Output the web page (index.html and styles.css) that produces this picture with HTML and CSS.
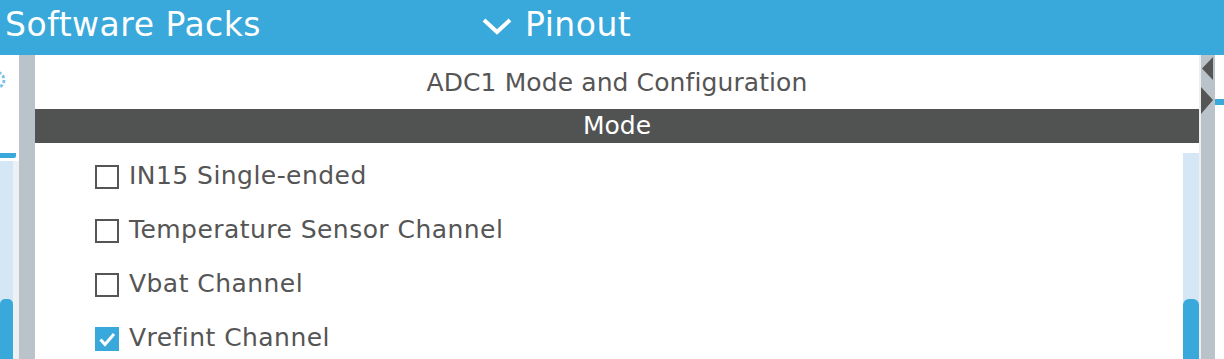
FILE: index.html
```html
<!DOCTYPE html>
<html>
<head>
<meta charset="utf-8">
<link rel="stylesheet" href="styles.css">
</head>
<body>
<div class="app">
  <header class="topbar">
    <div class="tab-sw">Software Packs</div>
    <div class="tab-pinout">
      <svg class="chevron" width="30" height="17" viewBox="0 0 30 17"><path d="M2 2 L15 14 L28 2" fill="none" stroke="#fff" stroke-width="4"/></svg>
      <span>Pinout</span>
    </div>
  </header>
  <div class="main">
    <aside class="left-strip">
      <svg class="gear" width="6" height="26" viewBox="0 0 6 26"><circle cx="-4" cy="13" r="8" fill="none" stroke="#7cc3e8" stroke-width="3" stroke-dasharray="3 2"/></svg>
      <div class="left-tab"></div>
      <div class="left-scroll">
        <div class="left-track"><div class="left-thumb"></div></div>
        <div class="left-edge"></div>
      </div>
    </aside>
    <div class="splitter"></div>
    <section class="panel">
      <div class="panel-title">ADC1 Mode and Configuration</div>
      <div class="section-bar">Mode</div>
      <div class="panel-body">
        <ul class="options">
          <li class="option"><span class="box"></span><span class="label">IN15 Single-ended</span></li>
          <li class="option"><span class="box"></span><span class="label">Temperature Sensor Channel</span></li>
          <li class="option"><span class="box"></span><span class="label">Vbat Channel</span></li>
          <li class="option"><span class="box checked"><svg width="24" height="24" viewBox="0 0 24 24"><path d="M5.5 12.5 L10 17.5 L19 7" fill="none" stroke="#fff" stroke-width="3"/></svg></span><span class="label">Vrefint Channel</span></li>
        </ul>
        <div class="scrollbar"><div class="thumb"></div></div>
      </div>
    </section>
    <div class="gap"></div>
    <div class="splitter right">
      <svg class="arrows" width="14" height="60" viewBox="0 0 14 60"><path d="M12 2 L1 13.5 L12 25 Z" fill="#555"/><path d="M0 32 L12 45 L0 59 Z" fill="#555"/></svg>
    </div>
    <div class="right-strip"><div class="right-mark"></div></div>
  </div>
</div>
</body>
</html>
```
FILE: styles.css
```css
html, body {
  margin: 0;
  padding: 0;
  width: 1224px;
  height: 359px;
  overflow: hidden;
  background: #fff;
  font-family: "DejaVu Sans", sans-serif;
}
.app {
  display: flex;
  flex-direction: column;
  width: 1224px;
  height: 359px;
}
.topbar {
  height: 55px;
  flex: 0 0 55px;
  background: #39a8da;
  color: #fff;
  display: flex;
  align-items: flex-start;
  font-size: 33px;
  line-height: 49px;
  letter-spacing: 0.5px;
}
.tab-sw {
  padding-left: 5px;
  width: 477px;
}
.tab-pinout {
  display: flex;
  align-items: flex-start;
}
.chevron {
  margin-top: 18px;
  margin-right: 13px;
}
.main {
  flex: 1;
  display: flex;
  min-height: 0;
}
.left-strip {
  width: 19px;
  flex: 0 0 19px;
  display: flex;
  flex-direction: column;
  background: #fff;
}
.gear {
  margin-top: 12px;
  display: block;
}
.left-tab {
  margin-top: 60px;
  width: 16px;
  height: 5px;
  background: #39a8da;
  border-bottom-right-radius: 2px;
}
.left-scroll {
  margin-top: 3px;
  flex: 1;
  display: flex;
}
.left-track {
  width: 13px;
  background: #d5e6f4;
  display: flex;
  flex-direction: column;
  justify-content: flex-end;
}
.left-thumb {
  height: 60px;
  background: #39a8da;
  border-radius: 5px 5px 0 0;
}
.left-edge {
  flex: 1;
  background: #eef1f3;
}
.splitter {
  width: 16px;
  flex: 0 0 16px;
  background: #b9c3c9;
}
.splitter.right {
  width: 14px;
  flex: 0 0 14px;
}
.arrows {
  display: block;
}
.panel {
  width: 1164px;
  flex: 0 0 1164px;
  display: flex;
  flex-direction: column;
}
.panel-title {
  height: 54px;
  line-height: 56px;
  text-align: center;
  font-size: 25px;
  letter-spacing: 0.1px;
  color: #555;
}
.section-bar {
  height: 34px;
  line-height: 34px;
  background: #515352;
  color: #fff;
  text-align: center;
  font-size: 25px;
}
.panel-body {
  flex: 1;
  display: flex;
  min-height: 0;
}
.options {
  list-style: none;
  margin: 0;
  padding: 7px 0 0 60px;
  flex: 1;
}
.option {
  height: 54px;
  display: flex;
  align-items: center;
  font-size: 25px;
  letter-spacing: 0.45px;
  color: #555;
}
.box {
  width: 20px;
  height: 20px;
  border: 2px solid #555;
  margin-right: 10px;
  flex: 0 0 auto;
}
.box.checked {
  width: 24px;
  height: 24px;
  border: none;
  background: #39a8da;
}
.box.checked svg {
  display: block;
}
.label {
  line-height: 30px;
  padding-bottom: 2px;
}
.scrollbar {
  width: 16px;
  margin-top: 10px;
  background: #d5e6f4;
  display: flex;
  flex-direction: column;
  justify-content: flex-end;
}
.thumb {
  height: 60px;
  background: #39a8da;
  border-radius: 6px 6px 0 0;
}
.gap {
  width: 2px;
  flex: 0 0 2px;
  background: #eceeef;
}
.right-strip {
  flex: 1;
  background: #fff;
}
.right-mark {
  margin-top: 44px;
  height: 6px;
  background: #39a8da;
}
```
